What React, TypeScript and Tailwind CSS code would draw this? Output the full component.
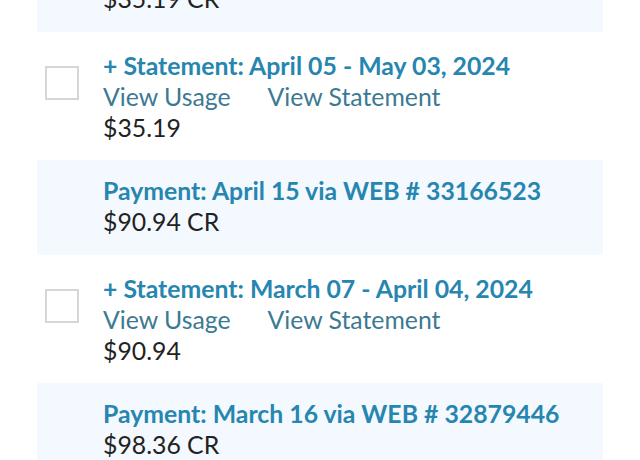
import React from "react";

const TITLE = "text-[#2786b0]";

type Item =
  | { kind: "payment"; title: string; amount: string }
  | { kind: "statement"; title: string; amount: string };

const items: Item[] = [
  { kind: "payment", title: "Payment: May 14 via WEB # 33482917", amount: "$35.19 CR" },
  { kind: "statement", title: "+ Statement: April 05 - May 03, 2024", amount: "$35.19" },
  { kind: "payment", title: "Payment: April 15 via WEB # 33166523", amount: "$90.94 CR" },
  { kind: "statement", title: "+ Statement: March 07 - April 04, 2024", amount: "$90.94" },
  { kind: "payment", title: "Payment: March 16 via WEB # 32879446", amount: "$98.36 CR" },
];

const PaymentRow = ({ title, amount }: { title: string; amount: string }) => (
  <div className="bg-[#f3f9fe] pl-[66px] pt-[15px] pb-[18px]">
    <div className={`font-bold ${TITLE}`}>{title}</div>
    <div className="text-[#222222]">{amount}</div>
  </div>
);

const StatementRow = ({ title, amount }: { title: string; amount: string }) => (
  <div className="flex pt-[18px] pb-[17px]">
    <div className="w-[66px] shrink-0 pl-[8px] pt-[16px]">
      <div className="w-[34px] h-[34px] border-2 border-[#d6d6d6] bg-white" />
    </div>
    <div className="flex flex-col">
      <div className={`font-bold ${TITLE}`}>{title}</div>
      <div className="flex text-[#3b7a92]">
        <span>View Usage</span>
        <span className="ml-[37px]">View Statement</span>
      </div>
      <div className="text-[#222222]">{amount}</div>
    </div>
  </div>
);

export default function App() {
  return (
    <div
      className="w-[640px] h-[460px] overflow-hidden bg-white text-[24.8px] leading-[31px]"
      style={{ fontFamily: "Lato, 'Noto Sans', sans-serif" }}
    >
      <div className="ml-[37px] w-[566px] -mt-[63px]">
        {items.map((it, i) =>
          it.kind === "payment" ? (
            <PaymentRow key={i} title={it.title} amount={it.amount} />
          ) : (
            <StatementRow key={i} title={it.title} amount={it.amount} />
          )
        )}
      </div>
    </div>
  );
}
